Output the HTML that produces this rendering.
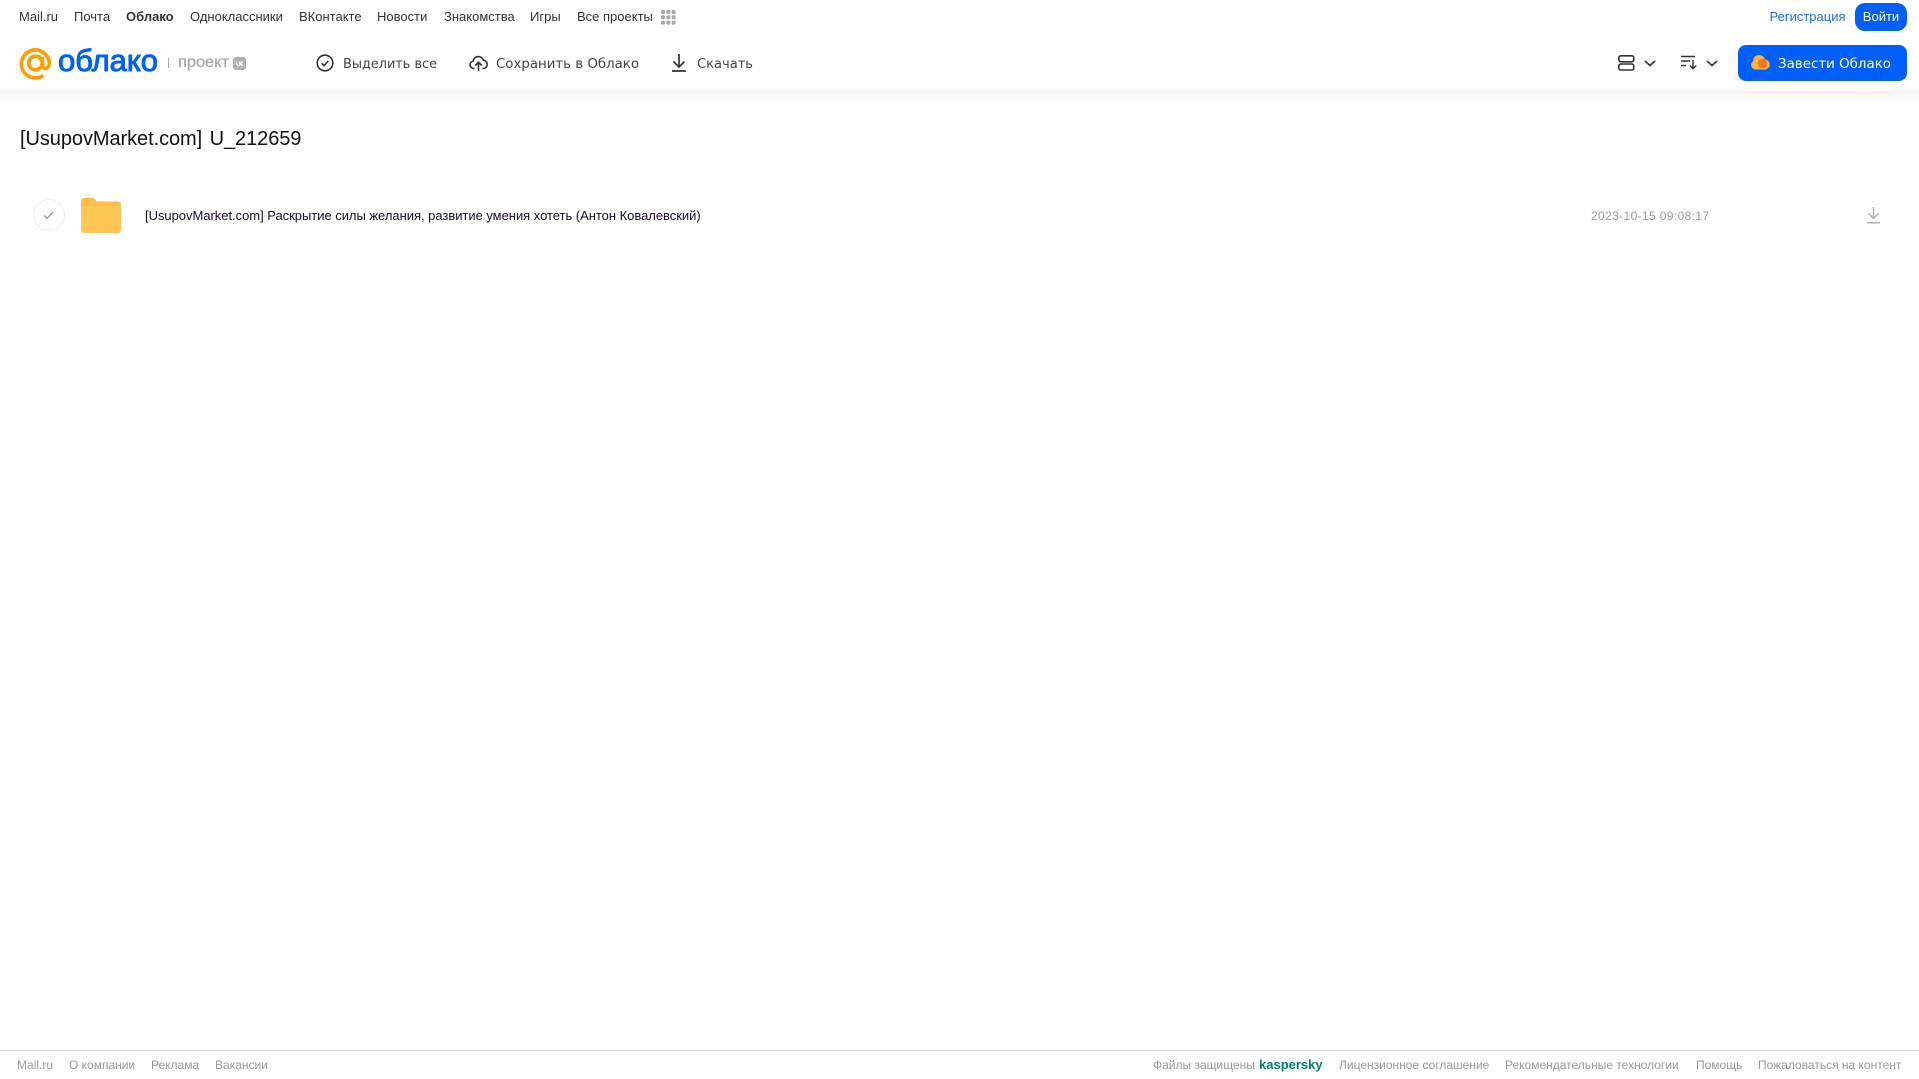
<!DOCTYPE html>
<html lang="ru"><head><meta charset="utf-8"><title>Облако</title>
<style>
html,body{margin:0;padding:0;background:#fff;width:1919px;height:1079px;overflow:hidden;font-family:"Liberation Sans",Arial,sans-serif}
.t{position:absolute;white-space:nowrap;line-height:16px}
.n{top:9px;font-size:13px;color:#333}
.f{top:1057px;font-size:12px;color:#999}
svg{position:absolute;overflow:visible}
</style></head><body>
<div style="position:absolute;left:0;top:90px;width:1919px;height:12px;background:linear-gradient(#f3f3f3,#fff)"></div>

<span class="t n" style="left:19px">Mail.ru</span>
<span class="t n" style="left:74px">Почта</span>
<span class="t n" style="left:126px;font-weight:bold">Облако</span>
<span class="t n" style="left:190px">Одноклассники</span>
<span class="t n" style="left:299px">ВКонтакте</span>
<span class="t n" style="left:377px">Новости</span>
<span class="t n" style="left:444px">Знакомства</span>
<span class="t n" style="left:530px">Игры</span>
<span class="t n" style="left:577px">Все проекты</span>
<svg style="left:661px;top:10px" width="15" height="15" fill="#a8a8a8"><rect width="4" height="4" rx="1.200"/><rect x="5.300" width="4" height="4" rx="1.200"/><rect x="10.600" width="4" height="4" rx="1.200"/><rect y="5.300" width="4" height="4" rx="1.200"/><rect x="5.300" y="5.300" width="4" height="4" rx="1.200"/><rect x="10.600" y="5.300" width="4" height="4" rx="1.200"/><rect y="10.600" width="4" height="4" rx="1.200"/><rect x="5.300" y="10.600" width="4" height="4" rx="1.200"/><rect x="10.600" y="10.600" width="4" height="4" rx="1.200"/></svg>

<span class="t" style="left:1769.500px;top:9px;font-size:13px;color:#1a6ff0">Регистрация</span>
<div class="t" style="left:1855px;top:3px;width:52px;height:28px;border-radius:10px;background:#005ff9;color:#fff;font-size:13px;line-height:27px;text-align:center">Войти</div>

<!-- logo -->
<svg style="left:18.500px;top:46.500px" width="33" height="33" viewBox="0 0 33 33" fill="none" stroke="#ff9e00" stroke-width="3.700"><circle cx="16.500" cy="16" r="6.800"/><path d="M23.300 9.500v8.500c0 5 6.900 5 7-2.500a14 14 0 1 0-6 13"/></svg>
<svg style="left:58px;top:40px" width="102" height="40"><text x="0" y="31" font-family="Liberation Sans" font-size="31" fill="#005ff9" stroke="#005ff9" stroke-width="1" textLength="100" lengthAdjust="spacingAndGlyphs">облако</text></svg>
<div style="position:absolute;left:168px;top:58px;width:1px;height:10px;background:#aaa"></div>
<svg style="left:178px;top:52px" width="52" height="20"><text x="0" y="15" font-family="Liberation Sans" font-size="16" fill="#a8a8a8" stroke="#a8a8a8" stroke-width=".3" textLength="51" lengthAdjust="spacingAndGlyphs">проект</text></svg>
<svg style="left:233px;top:57px" width="13" height="13"><rect width="13" height="13" rx="3" fill="#b0b0b0"/><path d="M3 4.500c.3 3 1.600 4.500 3.600 4.500V4.500M10 4.500 7 6.700 10.200 9" fill="none" stroke="#fff" stroke-width="1.100"/></svg>

<!-- toolbar -->
<svg style="left:316px;top:54px" width="18" height="18" fill="none" stroke="#333" stroke-width="1.600"><circle cx="9" cy="9" r="7.800"/><path d="M5.600 9.200l2.400 2.400 4.400-4.600"/></svg>
<svg style="left:343px;top:51.500px" width="96" height="22"><text x="0" y="16" font-family="DejaVu Sans" font-size="13.500" fill="#444" textLength="94" lengthAdjust="spacingAndGlyphs">Выделить все</text></svg>
<svg style="left:469px;top:54px" width="19" height="18" fill="none" stroke="#333" stroke-width="1.600"><path d="M5.500 14.500H4.500a3.700 3.700 0 0 1-.6-7.300 5.500 5.500 0 0 1 10.600-1 4.200 4.200 0 0 1 .3 8.300h-1.300"/><path d="M9.500 17V8.500M6.300 11.500l3.200-3.200 3.200 3.200"/></svg>
<svg style="left:496px;top:51.500px" width="146" height="22"><text x="0" y="16" font-family="DejaVu Sans" font-size="13.500" fill="#444" textLength="143" lengthAdjust="spacingAndGlyphs">Сохранить в Облако</text></svg>
<svg style="left:672px;top:54px" width="14" height="18" fill="none" stroke="#333" stroke-width="1.700"><path d="M7 0v12.500M1.500 7.500 7 13l5.500-5.500M0 17h14"/></svg>
<svg style="left:697px;top:51.500px" width="58" height="22"><text x="0" y="16" font-family="DejaVu Sans" font-size="13.500" fill="#444" textLength="56" lengthAdjust="spacingAndGlyphs">Скачать</text></svg>

<svg style="left:1618px;top:55px" width="17" height="16" fill="none" stroke="#333" stroke-width="1.600"><rect x=".8" y=".8" width="15" height="6" rx="2"/><rect x=".8" y="9" width="15" height="6" rx="2"/></svg>
<svg style="left:1644px;top:60px" width="12" height="7" fill="none" stroke="#333" stroke-width="1.700"><path d="M1 1l5 4.500L11 1"/></svg>
<svg style="left:1681px;top:55px" width="17" height="15" fill="none" stroke="#333" stroke-width="1.400"><path d="M0 1.500h14M0 6h9M0 10.500h5M12 5v8.500M8.800 10.500l3.200 3.200 3.200-3.200"/></svg>
<svg style="left:1706px;top:60px" width="12" height="7" fill="none" stroke="#333" stroke-width="1.700"><path d="M1 1l5 4.500L11 1"/></svg>

<div style="position:absolute;left:1738px;top:45px;width:169px;height:36px;border-radius:8px;background:#005ff9"></div>
<svg style="left:1751px;top:55px" width="19" height="15"><g fill="#ffb340"><circle cx="8" cy="6" r="6"/><circle cx="4.500" cy="10" r="4.500"/><circle cx="13.500" cy="9.500" r="5.200"/><rect x="4" y="8" width="10" height="6.500"/></g><circle cx="11.500" cy="8.500" r="4.700" fill="#f5761f"/></svg>
<svg style="left:1778px;top:51.500px" width="116" height="22"><text x="0" y="16" font-family="DejaVu Sans" font-size="13.500" fill="#fff" textLength="113" lengthAdjust="spacingAndGlyphs">Завести Облако</text></svg>

<!-- title -->
<span class="t" style="left:20px;top:127px;font-size:20px;line-height:24px;letter-spacing:-.07px;word-spacing:2px;color:#111">[UsupovMarket.com] U_212659</span>

<!-- row -->
<div style="position:absolute;left:33px;top:199px;width:30px;height:30px;border:1px solid #eee;border-radius:50%"></div>
<svg style="left:43px;top:211px" width="11" height="9" fill="none" stroke="#999" stroke-width="1.400"><path d="M1 4.500l3 3 6-6.500"/></svg>
<svg style="left:81px;top:198px" width="40" height="35"><path d="M0 3a3 3 0 0 1 3-3h7c3 0 4 1 5.500 3.500H37a3 3 0 0 1 3 3V8H0z" fill="#ffbe4a"/><path d="M0 8h40v24a3 3 0 0 1-3 3H3a3 3 0 0 1-3-3z" fill="#ffc555"/><rect y="7" width="40" height="1" fill="#fbbd4b"/></svg>
<span class="t" style="left:145px;top:208px;font-size:13px;letter-spacing:-.03px;color:#1a0a2a">[UsupovMarket.com] Раскрытие силы желания, развитие умения хотеть (Антон Ковалевский)</span>
<span class="t" style="left:1591px;top:208px;font-size:12px;letter-spacing:.37px;color:#999">2023-10-15 09:08:17</span>
<svg style="left:1867px;top:207px" width="13" height="17" fill="none" stroke="#aaa" stroke-width="1.300"><path d="M6.500 0v11.500M1.500 6.500l5 5 5-5M0 15.800h13"/></svg>

<!-- footer -->
<div style="position:absolute;left:0;top:1050px;width:1919px;height:1px;background:#ddd"></div>
<span class="t f" style="left:17px">Mail.ru</span>
<span class="t f" style="left:69px">О компании</span>
<span class="t f" style="left:151px">Реклама</span>
<span class="t f" style="left:215px">Вакансии</span>
<span class="t f" style="left:1153px">Файлы защищены</span>
<span class="t f" style="left:1259px;font-size:13px;font-weight:bold;color:#00806b">kaspersky</span>
<span class="t f" style="left:1339px">Лицензионное соглашение</span>
<span class="t f" style="left:1505px">Рекомендательные технологии</span>
<span class="t f" style="left:1696px">Помощь</span>
<span class="t f" style="left:1758px">Пожаловаться на контент</span>
</body></html>
